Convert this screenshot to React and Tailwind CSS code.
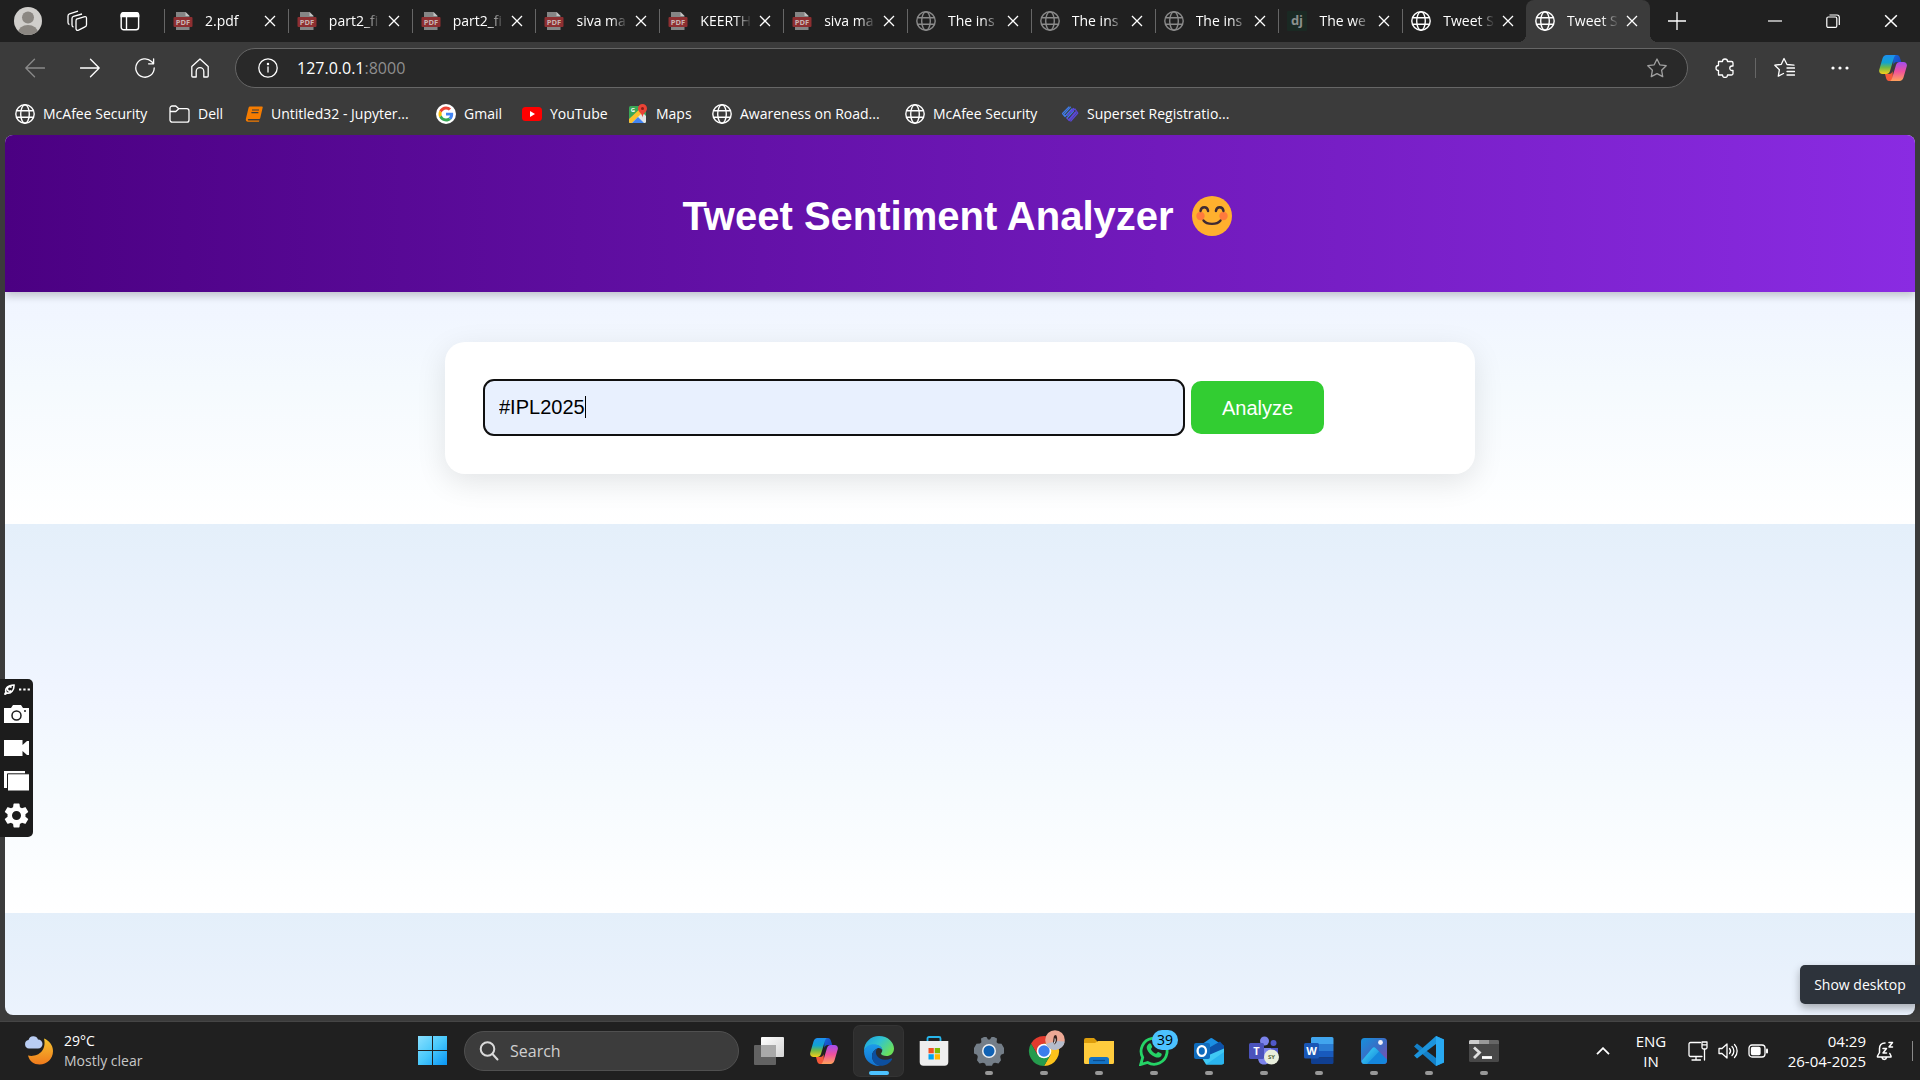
import React from "react";

const UI = "font-['Open_Sans','Noto_Sans',sans-serif]";

/* ---------- shared icons ---------- */

function Globe({ className = "size-5 text-white" }) {
  return (
    <svg viewBox="0 0 20 20" fill="none" stroke="currentColor" strokeWidth="1.4" className={`${className} shrink-0`} aria-hidden="true">
      <circle cx="10" cy="10" r="9.2" />
      <ellipse cx="10" cy="10" rx="4.3" ry="9.2" />
      <path d="M1.6 6.7h16.8M1.6 13.3h16.8" />
    </svg>
  );
}

function PdfIcon() {
  return (
    <svg viewBox="0 0 20 20" className="size-5 shrink-0" aria-hidden="true">
      <path d="M3 1h9.500L16.500 5V19H3z" fill="#858585" />
      <path d="M12.500 1L16.500 5h-4z" fill="#c4c4c4" />
      <rect x=".5" y="6" width="19" height="10" rx="1" fill="#8e2f31" />
      <text x="10" y="13.800" fontSize="7.500" fontWeight="700" fill="#c9b4b4" textAnchor="middle" fontFamily="Open Sans">PDF</text>
    </svg>
  );
}

function DjangoIcon() {
  return (
    <svg viewBox="0 0 20 20" className="size-5 shrink-0" aria-hidden="true">
      <rect width="20" height="20" rx="1" fill="#1a2923" />
      <text x="10" y="14" fontSize="13" fontWeight="700" fill="#8b908e" textAnchor="middle" fontFamily="Open Sans">dj</text>
    </svg>
  );
}

function Close({ className = "size-3" }) {
  return (
    <svg viewBox="0 0 12 12" fill="none" stroke="currentColor" strokeWidth="1.3" className={className} aria-hidden="true">
      <path d="M1 1l10 10M11 1L1 11" />
    </svg>
  );
}

function Copilot({ className }) {
  return (
    <svg viewBox="0 0 28 26" className={className} aria-hidden="true">
      <defs>
        <linearGradient id="cpA" x1="0" y1="0" x2="0" y2="1">
          <stop offset="0" stopColor="#1d8ff0" />
          <stop offset=".4" stopColor="#12a3cf" />
          <stop offset=".65" stopColor="#6db849" />
          <stop offset="1" stopColor="#f6cf1a" />
        </linearGradient>
        <linearGradient id="cpB" x1="0" y1="0" x2="0" y2="1">
          <stop offset="0" stopColor="#a24df0" />
          <stop offset=".5" stopColor="#f0519c" />
          <stop offset="1" stopColor="#ffa25b" />
        </linearGradient>
        <linearGradient id="cpC" x1="0" y1="0" x2="1" y2="1">
          <stop offset="0" stopColor="#1668d8" />
          <stop offset="1" stopColor="#1b3fc0" />
        </linearGradient>
      </defs>
      <path d="M14 0h4c1.500 0 2.300.9 2.800 2.400L22.300 7H18c-2 0-3 1-3.600 3z" fill="url(#cpC)" />
      <path d="M14 26h-4c-1.500 0-2.300-.9-2.800-2.400L6 19h4c2 0 3-1 3.600-3z" fill="#f4593a" />
      <path d="M7.500 0H17c-1.200.6-1.700 1.700-2.200 3.300L11 16c-.7 2-1.800 3-3.800 3H3.500C.8 19-.4 17 .3 14.400L3.500 3.500C4.200 1.200 5.500 0 7.500 0z" fill="url(#cpA)" />
      <path d="M20.500 26H11c1.200-.6 1.700-1.700 2.200-3.300L17 10c.7-2 1.800-3 3.800-3h3.700c2.700 0 3.900 2 3.200 4.600l-3.200 10.900c-.7 2.300-2 3.500-4 3.500z" fill="url(#cpB)" />
    </svg>
  );
}

/* ---------- tab strip ---------- */

const tabs = [
  { title: "2.pdf", icon: "pdf" },
  { title: "part2_fi", icon: "pdf" },
  { title: "part2_fi", icon: "pdf" },
  { title: "siva ma", icon: "pdf" },
  { title: "KEERTH", icon: "pdf" },
  { title: "siva ma", icon: "pdf" },
  { title: "The ins", icon: "dim" },
  { title: "The ins", icon: "dim" },
  { title: "The ins", icon: "dim" },
  { title: "The we", icon: "dj" },
  { title: "Tweet S", icon: "globe" },
  { title: "Tweet S", icon: "globe", active: true },
];

function TabIcon({ kind }) {
  if (kind === "pdf") return <PdfIcon />;
  if (kind === "dj") return <DjangoIcon />;
  return <Globe className={kind === "dim" ? "size-5 text-[#8a8a8a]" : "size-5 text-white"} />;
}

function Tab({ title, icon, active }) {
  const shape = active
    ? "bg-[#3b3b3b] rounded-t-lg before:absolute before:bottom-0 before:-left-2 before:size-2 before:bg-[radial-gradient(circle_at_0_0,#202020_8px,#3b3b3b_8px)] after:absolute after:bottom-0 after:-right-2 after:size-2 after:bg-[radial-gradient(circle_at_100%_0,#202020_8px,#3b3b3b_8px)]"
    : "";
  return (
    <div className={`relative flex h-full min-w-0 flex-1 items-center pr-3 ${shape}`}>
      <span className={`h-6 w-px shrink-0 ${active ? "" : "bg-[#666]"}`} />
      <button className="flex min-w-0 flex-1 items-center gap-3 pl-2 text-white">
        <TabIcon kind={icon} />
        <span className="w-[54px] text-left text-sm whitespace-nowrap [mask-image:linear-gradient(to_right,black_64%,transparent_96%)]">{title}</span>
      </button>
      <button aria-label="Close tab" className="shrink-0 text-white"><Close /></button>
    </div>
  );
}

function TabStrip() {
  return (
    <header className="flex h-[42px] items-center bg-[#202020] text-white">
      <div className="flex w-[164px] shrink-0 items-center pl-3.5">
        <button aria-label="Profile">
          <svg viewBox="0 0 28 28" className="size-7" aria-hidden="true">
            <defs><clipPath id="avatar"><circle cx="14" cy="14" r="14" /></clipPath></defs>
            <g clipPath="url(#avatar)">
              <rect width="28" height="28" fill="#d0cecb" />
              <circle cx="14" cy="10.500" r="6" fill="#8b8782" />
              <ellipse cx="14" cy="26" rx="10" ry="8" fill="#8b8782" />
            </g>
          </svg>
        </button>
        <button aria-label="Workspaces" className="ml-6">
          <svg viewBox="0 0 22 22" fill="none" stroke="currentColor" strokeWidth="1.300" strokeLinejoin="round" className="size-[22px]" aria-hidden="true">
            <path d="M10.500 9.200l7.500-2.400c1.500-.5 2.500 0 2.500 1.500v6.500c0 1-.5 1.700-1.500 2l-6.500 3.300c-1.500.6-2.500 0-2.500-1.500v-7.200c0-1.200.2-1.900.5-2.200z" />
            <path d="M7.500 17c-1-.2-1.500-.9-1.500-2V8.500c0-1.200.5-1.900 1.500-2.200L16 4" />
            <path d="M3.500 14.500c-1-.2-1.500-.9-1.500-2V6c0-1.200.5-1.900 1.500-2.200L12 1.200" />
          </svg>
        </button>
        <button aria-label="Tab actions" className="ml-8">
          <svg viewBox="0 0 20 20" fill="none" stroke="currentColor" strokeWidth="1.400" className="size-5" aria-hidden="true">
            <rect x="1.200" y="1.700" width="17.400" height="17" rx="2.500" />
            <path d="M1.200 5.500V4.200A2.500 2.500 0 0 1 3.700 1.700h12.400a2.500 2.500 0 0 1 2.500 2.500v1.300z" fill="currentColor" />
            <path d="M6.500 5.500v13" />
          </svg>
        </button>
      </div>
      <nav aria-label="Tabs" className="flex h-full w-full max-w-[1486px] min-w-0">
        {tabs.map((t, i) => <Tab key={i} {...t} />)}
      </nav>
      <button aria-label="New tab" className="ml-3.5 px-1">
        <svg viewBox="0 0 18 18" stroke="currentColor" strokeWidth="1.300" className="size-[18px]" aria-hidden="true"><path d="M9 0v18M0 9h18" /></svg>
      </button>
      <div className="ml-auto flex items-center gap-11 pr-[22px]">
        <button aria-label="Minimize">
          <svg viewBox="0 0 14 14" stroke="currentColor" strokeWidth="1.200" className="size-3.5" aria-hidden="true"><path d="M0 7h14" /></svg>
        </button>
        <button aria-label="Restore">
          <svg viewBox="0 0 14 14" fill="none" stroke="currentColor" strokeWidth="1.200" className="size-3.5" aria-hidden="true">
            <rect x=".8" y="3" width="10" height="10.400" rx="1.500" />
            <path d="M3.500 1h7.500a2.300 2.300 0 0 1 2.300 2.300V11" />
          </svg>
        </button>
        <button aria-label="Close window"><Close className="size-3.5" /></button>
      </div>
    </header>
  );
}

/* ---------- toolbar ---------- */

const lineIcon = { fill: "none", stroke: "currentColor", strokeWidth: 1.3, strokeLinecap: "round", strokeLinejoin: "round" };

function Toolbar() {
  return (
    <div className="flex h-[51px] items-center text-white">
      <div className="flex w-[230px] shrink-0 items-center gap-[35px] pl-[25px]">
        <button aria-label="Back" className="text-[#8a8a8a]">
          <svg viewBox="0 0 20 20" {...lineIcon} className="size-5" aria-hidden="true"><path d="M19.500 10H.8M9.500 1.200L.8 10l8.700 8.800" /></svg>
        </button>
        <button aria-label="Forward">
          <svg viewBox="0 0 20 20" {...lineIcon} className="size-5" aria-hidden="true"><path d="M.5 10h18.700M10.500 1.200l8.700 8.800-8.700 8.800" /></svg>
        </button>
        <button aria-label="Refresh">
          <svg viewBox="0 0 20 20" {...lineIcon} className="size-5" aria-hidden="true"><path d="M19.200 10A9.200 9.200 0 1 1 16.500 3.500L18.500 5.500M18.600.8v5h-5" /></svg>
        </button>
        <button aria-label="Home">
          <svg viewBox="0 0 20 20" {...lineIcon} className="size-5" aria-hidden="true"><path d="M1.800 8.500L10 1l8.200 7.500V18a1 1 0 0 1-1 1h-3.400v-5.500a3.800 3.800 0 0 0-7.600 0V19H2.800a1 1 0 0 1-1-1z" /></svg>
        </button>
      </div>
      <form className="relative ml-[5px] flex h-10 min-w-0 flex-1 items-center rounded-full border border-[#666] bg-[#292929] pr-5 pl-[22px]">
        <button type="button" aria-label="Site information">
          <svg viewBox="0 0 20 20" {...lineIcon} className="size-5" aria-hidden="true"><circle cx="10" cy="10" r="9.200" /><path d="M10 9v5" /><circle cx="10" cy="6" r=".6" fill="currentColor" /></svg>
        </button>
        <a href="#address" className="ml-[19px] flex-1 text-base text-white">127.0.0.1<span className="text-[#8f8f8f]">:8000</span></a>
        <button type="button" aria-label="Add to favorites" className="text-[#a0a0a0]">
          <svg viewBox="0 0 20 20" {...lineIcon} className="size-5" aria-hidden="true"><path d="M10 1l2.800 5.800 6.400.9-4.600 4.500 1.100 6.400L10 15.600l-5.700 3 1.100-6.400L.8 7.700l6.400-.9z" /></svg>
        </button>
      </form>
      <div className="flex w-[232px] shrink-0 items-center pl-[27px]">
        <button aria-label="Extensions">
          <svg viewBox="0 0 20 20" {...lineIcon} className="size-5" aria-hidden="true"><path d="M3.500 3.500h4a2.500 2.500 0 0 1 5 0h4a1.500 1.500 0 0 1 1.500 1.500v3h-1a2 2 0 0 0 0 4.500h1v3a1.500 1.500 0 0 1-1.500 1.500h-4a2.500 2.500 0 0 1-5 0h-4V12.500a2.400 2.400 0 0 1 0-5z" /></svg>
        </button>
        <span className="ml-5 h-5 w-px bg-[#666]" />
        <button aria-label="Favorites" className="ml-[18px]">
          <svg viewBox="0 0 21 20" {...lineIcon} className="size-[21px]" aria-hidden="true"><path d="M20 7.700L13 7 10 1 7.300 6.800l-6.500.9 4.600 4.500-1.100 6.400L9.500 16M13 10.500h7.500M13 14h7.500M13 17.500h7.500" /></svg>
        </button>
        <button aria-label="More" className="ml-9">
          <svg viewBox="0 0 18 4" fill="currentColor" className="h-1 w-[18px]" aria-hidden="true"><circle cx="2" cy="2" r="1.600" /><circle cx="9" cy="2" r="1.600" /><circle cx="16" cy="2" r="1.600" /></svg>
        </button>
        <button aria-label="Copilot" className="ml-[30px]"><Copilot className="h-[26px] w-7" /></button>
      </div>
    </div>
  );
}

/* ---------- bookmarks ---------- */

const FolderIcon = () => (
  <svg viewBox="0 0 21 18" {...lineIcon} className="h-[18px] w-[21px] shrink-0" aria-hidden="true">
    <path d="M1 3.200A2.200 2.200 0 0 1 3.200 1h3.600l3 2.700h8a2.200 2.200 0 0 1 2.200 2.200V15a2.200 2.200 0 0 1-2.200 2.200H3.200A2.200 2.200 0 0 1 1 15zM1 6.500h5.800l3-2.800" />
  </svg>
);
const JupyterIcon = () => (
  <svg viewBox="0 0 18 16" className="h-4 w-[18px] shrink-0" aria-hidden="true">
    <path d="M5 .5h12a.8.8 0 0 1 .7 1l-2.500 10.700a1 1 0 0 1-1 .8H3.500c-.9 0-.9 1.500 0 1.500h10.800l-.3 1.200H3C.8 15.700.5 14 1 12.200L3.500 2C3.800 1 4.200.5 5 .5z" fill="#f57c00" />
    <path d="M7 4h7M6.400 6.600h7" stroke="#3b3b3b" strokeWidth="1.100" />
  </svg>
);
const GoogleIcon = () => (
  <svg viewBox="0 0 48 48" className="size-5 shrink-0" aria-hidden="true">
    <circle cx="24" cy="24" r="24" fill="#fff" />
    <g transform="translate(6 6) scale(.75)">
      <path fill="#EA4335" d="M24 9.500c3.540 0 6.710 1.220 9.210 3.600l6.850-6.850C35.900 2.380 30.470 0 24 0 14.620 0 6.510 5.380 2.560 13.220l7.980 6.190C12.430 13.720 17.740 9.500 24 9.500z" />
      <path fill="#4285F4" d="M46.980 24.550c0-1.570-.15-3.090-.38-4.550H24v9.020h12.940c-.58 2.960-2.260 5.480-4.780 7.180l7.730 6c4.510-4.180 7.090-10.360 7.090-17.650z" />
      <path fill="#FBBC05" d="M10.530 28.590A14.500 14.500 0 0 1 9.770 24c0-1.600.27-3.140.76-4.590l-7.980-6.190A23.900 23.900 0 0 0 0 24c0 3.870.92 7.540 2.560 10.780z" />
      <path fill="#34A853" d="M24 48c6.480 0 11.930-2.130 15.890-5.810l-7.730-6c-2.150 1.450-4.920 2.300-8.160 2.300-6.260 0-11.570-4.220-13.470-9.910l-7.980 6.190C6.510 42.620 14.620 48 24 48z" />
    </g>
  </svg>
);
const YouTubeIcon = () => (
  <svg viewBox="0 0 20 14" className="h-3.5 w-5 shrink-0" aria-hidden="true"><rect width="20" height="14" rx="3.500" fill="#f00" /><path d="M8 4l5 3-5 3z" fill="#fff" /></svg>
);
const MapsIcon = () => (
  <svg viewBox="0 0 20 20" className="size-5 shrink-0" aria-hidden="true">
    <rect x="1" y="2" width="17" height="17" rx="1.500" fill="#3aa757" />
    <path d="M1 19L13 7l5 5v5.500a1.500 1.500 0 0 1-1.500 1.500z" fill="#e5e5e5" />
    <path d="M1 15L15 2h3v3L4 19H2.500A1.500 1.500 0 0 1 1 17.500z" fill="#fbc02d" />
    <path d="M4 19l6-6 6 6z" fill="#4285f4" />
    <text x="5" y="8" fontSize="6" fontWeight="700" fill="#fff" textAnchor="middle" fontFamily="Open Sans">G</text>
    <path d="M14.500 0a4.500 4.500 0 0 0-4.500 4.500c0 3.500 4 4.500 4.500 9 .5-4.500 4.500-5.500 4.500-9A4.500 4.500 0 0 0 14.500 0z" fill="#ea4335" />
    <circle cx="14.500" cy="4.500" r="1.500" fill="#8c1d18" />
  </svg>
);
const SupersetIcon = () => (
  <svg viewBox="0 0 18 16" fill="none" strokeWidth="1.200" strokeLinecap="round" strokeLinejoin="round" className="h-4 w-[18px] shrink-0" aria-hidden="true">
    <path d="M8 1L1.500 7.500 4 10.500l7-7.500M6 12l6.500-7" stroke="#3f7be8" />
    <path d="M9.500 1.200L2.800 8.500" stroke="#3f7be8" />
    <path d="M12.500 2.500l-6 6.800M11 5.500l3-2.500 2.800 4-7 8M14.500 6l-6 7M6 12l2.200 2.500L15 6.500" stroke="#5a48d8" />
  </svg>
);

const bookmarks = [
  { label: "McAfee Security", icon: <Globe />, width: "w-[154px]" },
  { label: "Dell", icon: <FolderIcon />, width: "w-[76px]" },
  { label: "Untitled32 - Jupyter...", icon: <JupyterIcon />, width: "w-[191px]" },
  { label: "Gmail", icon: <GoogleIcon />, width: "w-[86px]" },
  { label: "YouTube", icon: <YouTubeIcon />, width: "w-[106px]" },
  { label: "Maps", icon: <MapsIcon />, width: "w-[84px]" },
  { label: "Awareness on Road...", icon: <Globe />, width: "w-[193px]" },
  { label: "McAfee Security", icon: <Globe />, width: "w-[156px]" },
  { label: "Superset Registratio...", icon: <SupersetIcon />, width: "w-[190px]" },
];

function Bookmarks() {
  return (
    <nav aria-label="Favorites bar" className="flex h-[42px] items-center pl-[15px] text-sm text-white">
      {bookmarks.map((b, i) => (
        <a key={i} href="#bookmark" className={`flex shrink-0 items-center gap-2 whitespace-nowrap ${b.width}`}>{b.icon}{b.label}</a>
      ))}
    </nav>
  );
}

/* ---------- page ---------- */

function Emoji() {
  return (
    <svg viewBox="0 0 40 40" className="size-10" role="img" aria-label="Smiling face">
      <circle cx="20" cy="20" r="20" fill="#ffb02e" />
      <circle cx="8.500" cy="20" r="4.200" fill="#ff7a3d" />
      <circle cx="31.500" cy="20" r="4.200" fill="#ff7a3d" />
      <g fill="none" stroke="#402a32" strokeWidth="2.400" strokeLinecap="round">
        <path d="M8.500 15c.6-5 7-5 7.600 0M23.900 15c.6-5 7-5 7.600 0" />
        <path d="M11.500 24.500c3.500 4.500 13.500 4.500 17 0" />
      </g>
    </svg>
  );
}

function Page() {
  return (
    <main className="mx-[5px] flex-1 overflow-hidden rounded-lg bg-[linear-gradient(#e4effa,#f0f5ff_42%,#f5fafe_65%,#fff)] bg-[length:100%_389px] font-['Liberation_Sans',Arial,sans-serif]">
      <div className="flex h-[157px] items-center justify-center bg-[linear-gradient(90deg,#4b0082,#8a2be2)] pt-1 pr-1.5 shadow-[0_4px_8px_rgba(0,0,0,0.2)]">
        <h1 className="flex items-center gap-[18px] text-[40px] leading-[48px] font-bold text-white">
          Tweet Sentiment Analyzer <Emoji />
        </h1>
      </div>
      <section className="mx-auto mt-[50px] max-w-[1030px] rounded-[20px] bg-white px-[38px] pt-[37px] pb-[38px] shadow-[0_8px_30px_rgba(0,0,0,0.1)]">
        <form className="flex items-center gap-1.5">
          <div className="relative max-w-[702px] flex-1">
            <input
              aria-label="Hashtag"
              defaultValue="#IPL2025"
              className="block h-[57px] w-full rounded-[11px] border-2 border-[#101010] bg-[#e8f0fe] px-3.5 pb-px text-xl text-black outline-none"
            />
            <span className="absolute top-[17px] left-[102px] h-[22px] w-px bg-black" />
          </div>
          <button type="button" className="h-[53px] rounded-[10px] bg-[#32cd32] px-[31px] text-xl text-white">Analyze</button>
        </form>
      </section>
    </main>
  );
}

function Recorder() {
  return (
    <aside className="absolute top-[679px] left-0 flex h-[158px] w-[33px] flex-col items-center rounded-r-[5px] bg-[#1c1c1c] text-white">
      <div className="flex h-5 items-center gap-1">
        <svg viewBox="0 0 11 11" fill="none" stroke="currentColor" strokeWidth="1.600" className="size-[11px]" aria-hidden="true">
          <path d="M.6 10.600L2 8C.8 5 3.500 1 10 1c.3 5-3 9-7 8z" /><path d="M7.500 3.500A2.300 2.300 0 1 0 7.300 6.600" />
        </svg>
        <svg viewBox="0 0 11 3" fill="currentColor" className="h-[3px] w-[11px]" aria-hidden="true"><path d="M0 .5h2.300v2H0zM4.300.5h2.300v2H4.300zM8.600.5h2.300v2H8.600z" /></svg>
      </div>
      <button aria-label="Screenshot" className="mt-1.5">
        <svg viewBox="0 0 25 18" className="h-[18px] w-[25px]" aria-hidden="true"><path d="M0 3h7l2-3h8l2 3h6v15H0z" fill="#fff" /><circle cx="12.500" cy="10.500" r="4.500" fill="#fff" stroke="#1c1c1c" strokeWidth="1.500" /><circle cx="21" cy="6" r="1" fill="#1c1c1c" /></svg>
      </button>
      <button aria-label="Record" className="mt-[17px]">
        <svg viewBox="0 0 25 16" fill="#fff" className="h-4 w-[25px]" aria-hidden="true"><path d="M0 0h18.500v5L23 1h2v14h-2l-4.500-4v5H0z" /></svg>
      </button>
      <button aria-label="Gallery" className="mt-[15px]">
        <svg viewBox="0 0 25 20" className="h-5 w-[25px]" aria-hidden="true"><path d="M0 0h21v17H0z" fill="#fff" /><path d="M3.500 2.800h22V20h-22z" fill="#fff" stroke="#1c1c1c" /></svg>
      </button>
      <button aria-label="Recorder settings" className="mt-3">
        <svg viewBox="2 2 20 20" fill="#fff" className="size-[25px]" aria-hidden="true"><path d="M19.140 12.940c.04-.3.060-.61.060-.94s-.02-.64-.07-.94l2.030-1.580a.49.49 0 0 0 .12-.61l-1.920-3.320a.49.49 0 0 0-.59-.22l-2.390.96c-.5-.38-1.030-.7-1.620-.94l-.36-2.540a.48.48 0 0 0-.48-.41h-3.840a.48.48 0 0 0-.47.41l-.36 2.540c-.59.24-1.130.57-1.620.94l-2.390-.96a.49.49 0 0 0-.59.22L2.740 8.870a.48.48 0 0 0 .12.61l2.030 1.580c-.05.3-.09.63-.09.94s.02.64.07.94l-2.030 1.580a.49.49 0 0 0-.12.61l1.920 3.320c.12.22.37.29.59.22l2.390-.96c.5.38 1.030.7 1.620.94l.36 2.540c.05.24.24.41.48.41h3.840c.24 0 .44-.17.47-.41l.36-2.540c.59-.24 1.130-.56 1.620-.94l2.390.96c.22.08.47 0 .59-.22l1.920-3.320a.48.48 0 0 0-.12-.61zM12 15.600a3.600 3.600 0 1 1 0-7.200 3.600 3.600 0 0 1 0 7.200z" /></svg>
      </button>
    </aside>
  );
}

/* ---------- taskbar ---------- */

const S = "size-[30px]";

const TaskView = () => (
  <svg viewBox="0 0 30 30" className={S} aria-hidden="true">
    <defs><linearGradient id="tv" x1="0" y1="0" x2="1" y2="1"><stop stopColor="#fff" /><stop offset="1" stopColor="#d4d4d4" /></linearGradient></defs>
    <rect x="7" y="1" width="23" height="20" rx="1" fill="url(#tv)" />
    <rect x="0" y="9" width="22" height="20" rx="1" fill="#6f6f6f" fillOpacity=".85" />
    <rect x="7" y="9" width="15" height="12" fill="#a9a9a9" />
  </svg>
);
const Edge = () => (
  <svg viewBox="0 0 30 30" className={S} aria-hidden="true">
    <defs>
      <linearGradient id="eA" x1="0" y1="0" x2="1" y2=".6"><stop stopColor="#1b9de0" /><stop offset=".5" stopColor="#30c3d2" /><stop offset="1" stopColor="#6be05a" /></linearGradient>
      <linearGradient id="eB" x1="0" y1="0" x2="0" y2="1"><stop stopColor="#1d9bea" /><stop offset="1" stopColor="#1272cf" /></linearGradient>
    </defs>
    <path d="M0 15C0 6 7 0 15 0c9 0 15 6.500 15 12.500 0 5-3.700 7.500-7.500 7.500-3 0-5.500-1-5.500-2.200 0-.9 1.300-1.400 1.300-3.800C18.300 11 14 9 9.800 9 5 9 1.500 11.500 0 15z" fill="url(#eA)" />
    <path d="M0 15c1-4 5-6.700 9.800-6.700 4.500 0 8.500 2.500 8.500 5.700-1.300-2-3.300-2.500-4.800-1.800C10 13.800 8 16.500 8 20c0 5 4 9.300 9 9.800-9 1-17-5-17-14.800z" fill="url(#eB)" />
    <path d="M13.500 12.200C10 13.800 8 16.500 8 20c0 5 4 9.800 9 9.800 5 0 9-2.800 11-6.300.4-.8-.3-1.200-1-.9-6 2.600-12.500.9-14.500-3.600-1.200-2.800-.5-5.300 1-6.800z" fill="#0d4f9e" />
  </svg>
);
const Store = () => (
  <svg viewBox="0 0 30 30" className={S} aria-hidden="true">
    <path d="M8.500 6V2.500A1.500 1.500 0 0 1 10 1h10a1.500 1.500 0 0 1 1.500 1.500V6" fill="none" stroke="#27b5ea" strokeWidth="1.800" />
    <path d="M.7 5h28.600v21a3.700 3.700 0 0 1-3.700 3.700H4.400A3.700 3.700 0 0 1 .7 26z" fill="#eee" />
    <path d="M9.500 12h5.300v5.300H9.500z" fill="#f25022" /><path d="M15.700 12H21v5.300h-5.300z" fill="#7fba00" /><path d="M9.500 18.200h5.300v5.300H9.500z" fill="#00a4ef" /><path d="M15.700 18.200H21v5.300h-5.300z" fill="#ffb900" />
  </svg>
);
const Settings = () => (
  <svg viewBox="0 0 30 30" className={S} aria-hidden="true">
    <path d="M10 1h2.500l1.500 2.500h2L17.500 1H20l3 1.600-.4 3.600 1.400 1.400 3.500.2L30 12v5.500l-3 1.300-.8 2 .8 3.400-2.500 3.300-3.500-.8-2 .8-1 2.300h-6l-1-2.300-2-.8-3.500.8L3 24.200l.8-3.400-.8-2-3-1.300V12l2.500-4.200 3.500-.2 1.400-1.400L7 2.600z" fill="#747e88" />
    <circle cx="15" cy="15" r="7" fill="#f0f2f4" /><circle cx="15" cy="15" r="5.500" fill="#1062b4" />
  </svg>
);
const Chrome = () => (
  <svg viewBox="0 0 30 30" className={`${S} overflow-visible`} aria-hidden="true">
    <path d="M2 7.500A15 15 0 0 1 28 7.500H15L8.500 18.700z" fill="#e33b2e" />
    <path d="M28 7.500A15 15 0 0 1 15 30l6.500-11.300L15 7.500z" fill="#fcc31c" />
    <path d="M15 30A15 15 0 0 1 2 7.500l6.500 11.200h13z" fill="#259b4d" />
    <circle cx="15" cy="15" r="7.300" fill="#fff" /><circle cx="15" cy="15" r="5.700" fill="#3b7ded" />
    <circle cx="26" cy="4" r="9.800" fill="#eda894" />
    <path d="M17 8a9.800 9.800 0 0 0 18.700-2.500L27 5z" fill="#b5bccb" />
    <path d="M27 -1c-3 0-2 3-3 6.500l1.200 3C28.500 7 29 1.500 27-1z" fill="#38221e" /><path d="M26 2.500c.3 2 0 3-.8 5" stroke="#fff" strokeWidth="1" fill="none" />
  </svg>
);
const Explorer = () => (
  <svg viewBox="0 0 30 30" className={S} aria-hidden="true">
    <path d="M0 4a2 2 0 0 1 2-2h8l3 3v5H0z" fill="#dc9d0c" />
    <path d="M0 7h11l3-2h16v21.500a1.500 1.500 0 0 1-1.500 1.500h-27A1.500 1.500 0 0 1 0 26.500z" fill="#ffcc3d" />
    <path d="M5 28v-4.500A2.500 2.500 0 0 1 7.500 21h15a2.500 2.500 0 0 1 2.500 2.500V28z" fill="#1473c4" /><path d="M9 24.500h12" stroke="#0b4c8d" strokeWidth="1.200" />
  </svg>
);
const WhatsApp = () => (
  <svg viewBox="0 0 30 30" className={S} aria-hidden="true">
    <path d="M1.700 28.500l2-7A13 13 0 1 1 8.600 26.500z" fill="none" stroke="#25d366" strokeWidth="2.800" />
    <path d="M9.500 8c1-1 2-.8 2.500 0l1.200 2.800c.2.500-1.400 1.900-1.200 2.400 1 2 2.700 3.700 4.900 4.600.6.200 1.800-2 2.400-1.700l3 1.500c.8.500.3 2-.3 2.700-1.400 1.500-3.500 1.500-6 .6-4-1.500-6.800-4.700-8-7.700-.6-2-.2-3.700 1.500-5.200z" fill="#25d366" />
  </svg>
);
const Outlook = () => (
  <svg viewBox="0 0 30 30" className={S} aria-hidden="true">
    <path d="M4 11L16.500 2.300a1.500 1.500 0 0 1 1.600 0L30 10v6L17 22 4 16z" fill="#1a8fe3" />
    <path d="M11 14L26 5.500 30 10v4l-14 9z" fill="#0d52a8" />
    <path d="M8 22L30 12.500V26a2.500 2.500 0 0 1-2.500 2.500H12z" fill="#40c9f4" />
    <path d="M12 28.500L30 16v10a2.500 2.500 0 0 1-2.500 2.500z" fill="#2ab4ee" />
    <rect x="0" y="7" width="16" height="16" rx="2" fill="#0f6cbd" />
    <ellipse cx="7.800" cy="15" rx="4.200" ry="4.900" fill="none" stroke="#fff" strokeWidth="2.300" />
  </svg>
);
const Teams = () => (
  <svg viewBox="0 0 30 30" className={S} aria-hidden="true">
    <circle cx="15.500" cy="5" r="4.500" fill="#7b83eb" /><circle cx="24.500" cy="7" r="3" fill="#5059c9" />
    <path d="M19 12h10v8a6 6 0 0 1-8 5z" fill="#5059c9" /><path d="M9 12h13v9c0 5-3 7.500-7 7.500S9 26 9 21z" fill="#7b83eb" />
    <rect x="0" y="7" width="15" height="16" rx="1.500" fill="#4b53bc" />
    <text x="7.500" y="19" fontSize="11" fontWeight="700" fill="#fff" textAnchor="middle" fontFamily="Open Sans">T</text>
    <circle cx="22.500" cy="21" r="7.500" fill="#e8eedc" />
    <text x="22.500" y="23" fontSize="6" fontWeight="700" fill="#5a6b44" textAnchor="middle" fontFamily="Open Sans">SY</text>
  </svg>
);
const Word = () => (
  <svg viewBox="0 0 30 30" className={S} aria-hidden="true">
    <path d="M8 1h20a1.500 1.500 0 0 1 1.500 1.500V8H7V2z" fill="#41a5ee" /><path d="M7 8h22.500v7H7z" fill="#2b7cd3" /><path d="M7 15h22.500v6.500H7z" fill="#185abd" /><path d="M7 21.500h22.500v5A1.500 1.500 0 0 1 28 28H8.500A1.500 1.500 0 0 1 7 26.500z" fill="#103f91" />
    <rect y="7" width="15" height="15.500" rx="1.500" fill="#1a56b5" />
    <text x="7.500" y="18.800" fontSize="11" fontWeight="700" fill="#fff" textAnchor="middle" fontFamily="Open Sans">W</text>
  </svg>
);
const Photos = () => (
  <svg viewBox="0 0 30 30" className={S} aria-hidden="true">
    <defs>
      <linearGradient id="phA" x1="0" y1="0" x2="1" y2="1"><stop stopColor="#1591dc" /><stop offset=".5" stopColor="#3b6cc4" /><stop offset="1" stopColor="#8a4bab" /></linearGradient>
      <linearGradient id="phB" x1="0" y1="0" x2="1" y2="1"><stop stopColor="#46dcfa" /><stop offset="1" stopColor="#0f80d8" /></linearGradient>
    </defs>
    <rect x="2" y="2" width="26" height="26" rx="3.500" fill="url(#phA)" />
    <path d="M3 26L13.500 12a2.200 2.200 0 0 1 3.200 0L28 23.500V25a3.500 3.500 0 0 1-3.500 3H5a3 3 0 0 1-2-2z" fill="#1586dc" />
    <path d="M2.500 25l11-13a2 2 0 0 1 3 0l3.500 3.600L8 28H5.500a3.300 3.300 0 0 1-3-3z" fill="url(#phB)" />
    <circle cx="21.500" cy="6.500" r="2.400" fill="#f0f0f8" />
  </svg>
);
const VSCode = () => (
  <svg viewBox="0 0 30 30" className={S} aria-hidden="true">
    <path d="M22 0l8 3.500v23L22 30 0 10.500 3 7.500 22 22z" fill="#1480c8" />
    <path d="M22 8L3 22.500 0 19.500 22 0z" fill="#1c94dc" />
    <path d="M22 0l8 3.500v23L22 30z" fill="#28a9f2" />
  </svg>
);
const Terminal = () => (
  <svg viewBox="0 0 30 30" className={S} aria-hidden="true">
    <rect x="0" y="4" width="30" height="22" rx="1.500" fill="#484848" />
    <path d="M0 8V5.500A1.500 1.500 0 0 1 1.500 4H10v4z" fill="#ccc" /><path d="M10 4h10v4H10z" fill="#999" /><path d="M20 4h8.500A1.500 1.500 0 0 1 30 5.500V8H20z" fill="#666" />
    <path d="M5 11.500l5.500 5-5.500 5.500" fill="none" stroke="#ddd" strokeWidth="2.800" /><path d="M13 21.500h10" stroke="#fff" strokeWidth="2.800" />
  </svg>
);

const apps = [
  { name: "Task view", icon: <TaskView /> },
  { name: "Copilot", icon: <Copilot className="h-[26px] w-7" /> },
  { name: "Edge", icon: <Edge />, state: "active" },
  { name: "Store", icon: <Store /> },
  { name: "Settings", icon: <Settings />, state: "open" },
  { name: "Chrome", icon: <Chrome />, state: "open" },
  { name: "File Explorer", icon: <Explorer />, state: "open" },
  { name: "WhatsApp", icon: <WhatsApp />, state: "open", badge: "39" },
  { name: "Outlook", icon: <Outlook />, state: "open" },
  { name: "Teams", icon: <Teams />, state: "open" },
  { name: "Word", icon: <Word />, state: "open" },
  { name: "Photos", icon: <Photos />, state: "open" },
  { name: "VS Code", icon: <VSCode />, state: "open" },
  { name: "Terminal", icon: <Terminal />, state: "open" },
];

function AppButton({ name, icon, state, badge }) {
  const mark = state === "active" ? "w-5 bg-[#4cc2ff]" : state === "open" ? "w-2 bg-[#989898]" : "w-2";
  return (
    <button aria-label={name} className={`relative flex h-[50px] w-[49px] flex-col items-center justify-end rounded-md ${state === "active" ? "bg-[#2d2d2d] ring-1 ring-[#343434]" : ""}`}>
      <span className="flex h-[30px] items-center">{icon}</span>
      <span className={`mt-[5px] mb-px h-1 rounded-full ${mark}`} />
      {badge && <span className="absolute top-1 right-0 flex h-5 w-[26px] items-center justify-center rounded-full bg-[#4cc2ff] text-sm text-black">{badge}</span>}
    </button>
  );
}

function Taskbar() {
  return (
    <footer className="flex h-[59px] shrink-0 items-center border-t border-[#454545] bg-[#202020] pb-px text-white">
      <button className="flex w-[418px] shrink-0 items-center gap-2.5 pl-6 text-left text-sm leading-5">
        <svg viewBox="0 0 30 30" className={S} aria-hidden="true">
          <defs><linearGradient id="moon" x1="0" y1="0" x2="0" y2="1"><stop stopColor="#f4c430" /><stop offset="1" stopColor="#f07a1c" /></linearGradient></defs>
          <path d="M20 2.500c5 2 9 6.500 9 12.500 0 8-6 13.500-13.500 13.500-5.500 0-10-3-11.500-9 9 2 19-4 16-17z" fill="url(#moon)" />
          <path d="M5 12.500a4.300 4.300 0 0 1-.5-8.500A5 5 0 0 1 14 3.500a4.500 4.500 0 0 1 0 9z" fill="#b9cdf3" />
        </svg>
        <span>29°C<br /><span className="text-[#c8c8c8]">Mostly clear</span></span>
      </button>
      <button aria-label="Start">
        <svg viewBox="0 0 29 29" className="size-[29px]" aria-hidden="true">
          <defs><linearGradient id="win" x1="0" y1="0" x2="29" y2="29" gradientUnits="userSpaceOnUse"><stop stopColor="#8ae0ff" /><stop offset=".5" stopColor="#48c8fb" /><stop offset="1" stopColor="#0895f5" /></linearGradient></defs>
          <path d="M0 0h14v14H0zM15 0h14v14H15zM0 15h14v14H0zM15 15h14v14H15z" fill="url(#win)" />
        </svg>
      </button>
      <label className="ml-[17px] flex h-10 w-[275px] items-center gap-[11px] rounded-full border border-[#505050] bg-[#3c3c3c] pl-3.5">
        <svg viewBox="0 0 20 20" fill="none" stroke="#dadada" strokeWidth="2" strokeLinecap="round" className="size-5 shrink-0" aria-hidden="true"><circle cx="8.500" cy="8" r="6.800" /><path d="M13.500 13l5 5.500" /></svg>
        <input aria-label="Search" placeholder="Search" className="w-full min-w-0 bg-transparent text-base text-white outline-none placeholder:text-[#cfcfcf] placeholder:opacity-100" />
      </label>
      <nav aria-label="Apps" className="ml-[5px] flex shrink-0 gap-1.5">
        {apps.map((a) => <AppButton key={a.name} {...a} />)}
      </nav>
      <div className="ml-auto flex shrink-0 items-center text-sm leading-5">
        <button aria-label="Hidden icons">
          <svg viewBox="0 0 14 8" fill="none" stroke="currentColor" strokeWidth="1.800" className="h-2 w-3.5" aria-hidden="true"><path d="M1 7.200l6-6 6 6" /></svg>
        </button>
        <button className="ml-6 w-[34px] text-center text-[15px]">ENG<br />IN</button>
        <button aria-label="Network, volume and battery" className="ml-5 flex items-center gap-2.5">
          <svg viewBox="0 0 20 20" {...lineIcon} className="size-5" aria-hidden="true"><path d="M12.500 1.500h-10A1.500 1.500 0 0 0 1 3v11a1.500 1.500 0 0 0 1.500 1.500H14M8 15.500V19M4 19h8.500M14 1h5v5.500a1.500 1.500 0 0 1-1.500 1.500h-2A1.500 1.500 0 0 1 14 6.500zM14 3.800h5M16.500 8v11" /></svg>
          <svg viewBox="0 0 20 20" {...lineIcon} className="size-5" aria-hidden="true"><path d="M1 7.500h3L9 3v14l-5-4.500H1zM11.500 7.500c1.300 1.500 1.300 3.500 0 5M14 5.500c2.500 2.500 2.500 6.500 0 9M16.500 3.500c3.500 3.500 3.500 9.500 0 13" /></svg>
          <svg viewBox="0 0 20 20" {...lineIcon} className="size-5" aria-hidden="true"><rect x="1" y="4" width="16" height="12" rx="3" /><rect x="3.500" y="6.500" width="8.500" height="7" rx="1" fill="currentColor" /><path d="M19 8.500v3" strokeWidth="2" /></svg>
        </button>
        <button className="ml-4 w-[82px] text-right text-[15px] whitespace-nowrap">04:29<br />26-04-2025</button>
        <button aria-label="Notifications" className="ml-[10px]">
          <svg viewBox="0 0 18 20" {...lineIcon} strokeWidth="1.500" className="h-5 w-[18px]" aria-hidden="true"><path d="M9 2C5.500 2 3.500 4.500 3.500 7.500v4L1.500 15v1h13.500v-1l-1.200-2.500M6 16.500c.5 2.500 4 2.500 4.500 0M7 7.500h3.500L7 12h3.500M13 1.500h3.500L13 6h3.500" /></svg>
        </button>
        <span className="mr-[7px] ml-[18px] h-5 w-px bg-[#8a8a8a]" />
      </div>
    </footer>
  );
}

export default function App() {
  return (
    <div className={`relative flex min-h-screen flex-col bg-[#3b3b3b] ${UI}`}>
      <TabStrip />
      <Toolbar />
      <Bookmarks />
      <Page />
      <div className="h-1.5 shrink-0" />
      <Taskbar />
      <Recorder />
      <div role="tooltip" className="absolute right-0 bottom-[76px] flex h-[39px] w-[120px] items-center justify-center rounded-l-[5px] bg-[#2d333b] text-sm text-white shadow-[0_4px_8px_rgba(0,0,0,0.3)]">Show desktop</div>
    </div>
  );
}
